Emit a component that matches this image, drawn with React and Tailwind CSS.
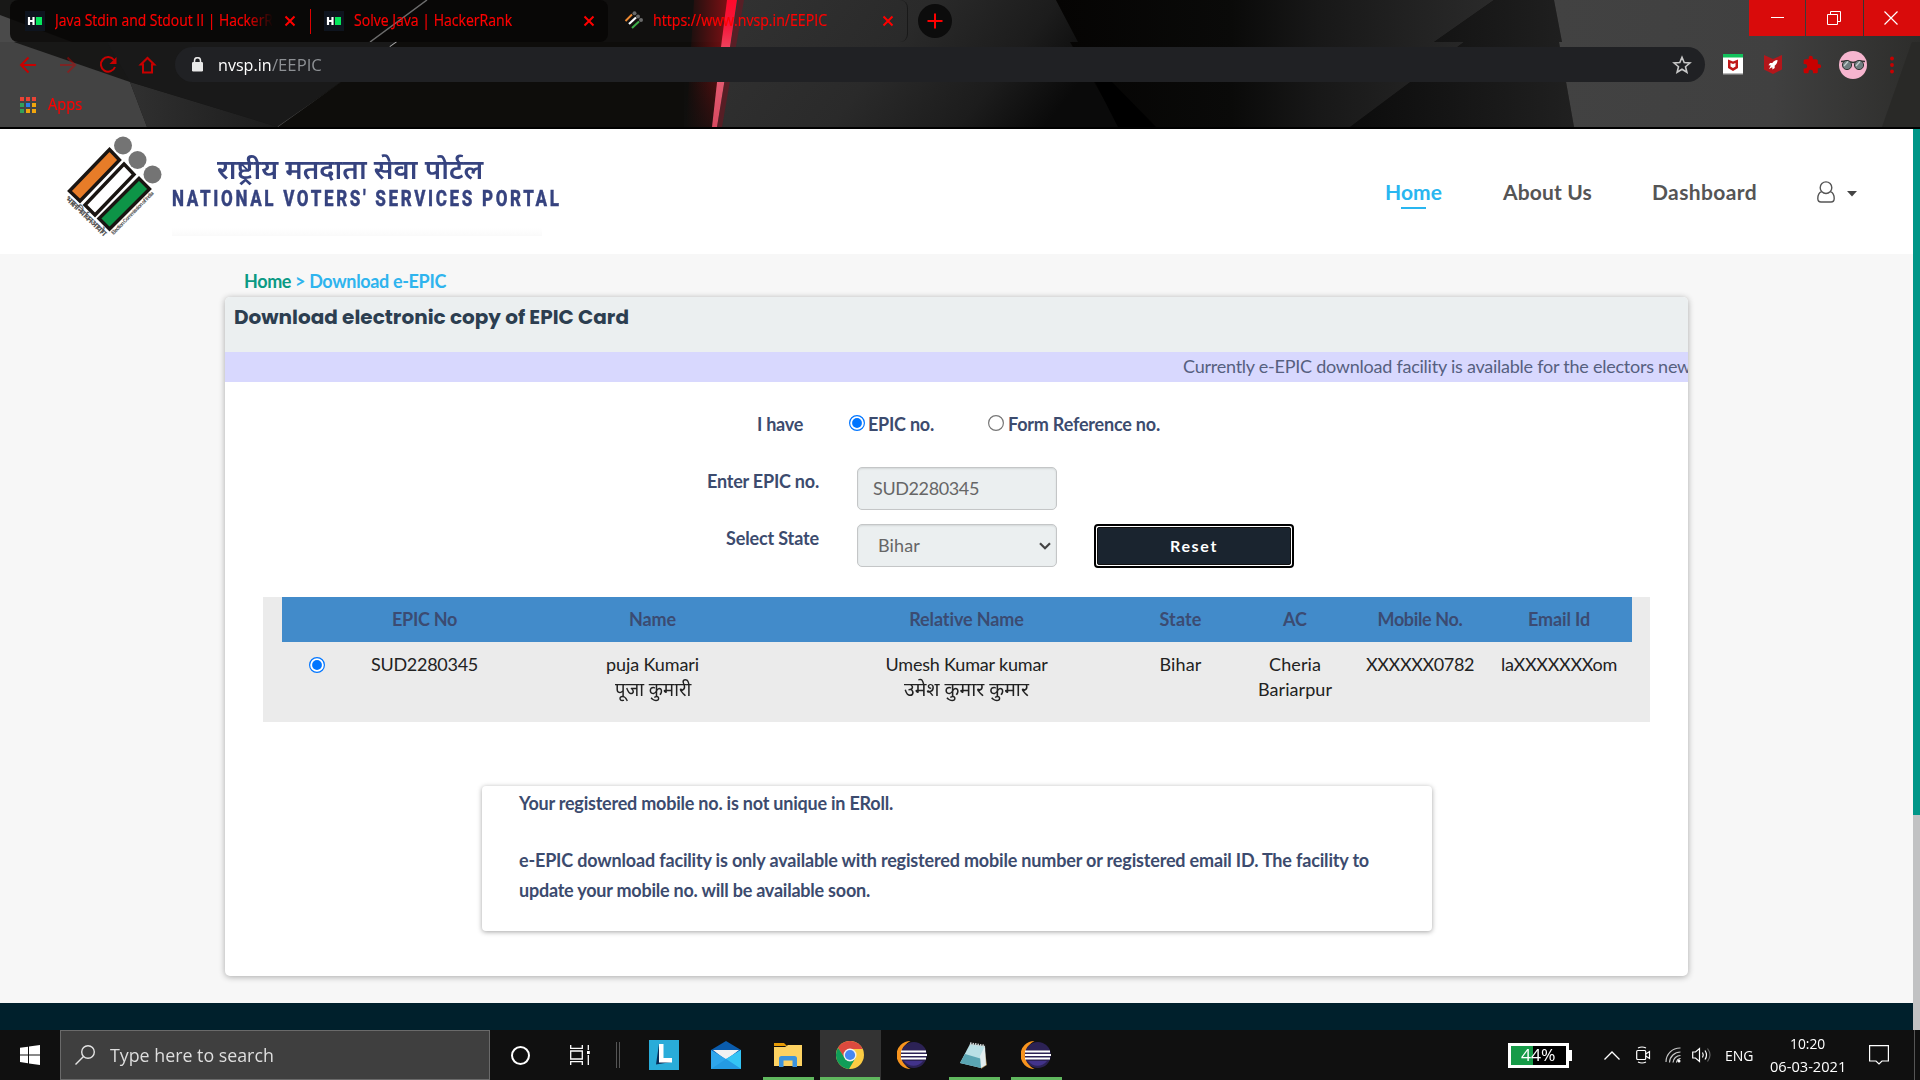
import React, { useLayoutEffect, useRef, useState } from "react";

/* One line of text whose tracking is adjusted so that it fills the given width. */
function Fit({ w, className = "", children }) {
  const ref = useRef(null);
  const [gap, setGap] = useState(0);
  useLayoutEffect(() => {
    const natural = ref.current.getBoundingClientRect().width;
    setGap((w - natural) / children.length);
  }, []);
  return (
    <span ref={ref} className={"inline-block whitespace-pre " + className} style={{ letterSpacing: gap + "px" }}>
      {children}
    </span>
  );
}

/* One line of text stretched horizontally to the given width. */
function Stretch({ w, className = "", children }) {
  const ref = useRef(null);
  const [scale, setScale] = useState(1);
  useLayoutEffect(() => {
    setScale(w / ref.current.offsetWidth);
  }, []);
  return (
    <span className="flex" style={{ width: w }}>
      <span ref={ref} className={"inline-block origin-left whitespace-pre " + className} style={{ transform: `scaleX(${scale})` }}>
        {children}
      </span>
    </span>
  );
}

function Wallpaper() {
  return (
    <svg className="absolute inset-0" width="1920" height="127" viewBox="0 0 1920 127">
      <defs>
        <linearGradient id="panel" x1="0" x2="1" y1="0" y2="0.25">
          <stop offset="0" stopColor="#323232" />
          <stop offset="0.5" stopColor="#2a2a2a" />
          <stop offset="0.8" stopColor="#1c1c1c" />
          <stop offset="1" stopColor="#0a0a0a" />
        </linearGradient>
        <linearGradient id="glow" x1="0" x2="1">
          <stop offset="0" stopColor="#c01010" stopOpacity="0" />
          <stop offset="0.4" stopColor="#c01014" stopOpacity="0.25" />
          <stop offset="1" stopColor="#c01018" stopOpacity="0.65" />
        </linearGradient>
        <linearGradient id="fade" x1="0" x2="0" y1="0" y2="1">
          <stop offset="0" stopColor="#11100f" stopOpacity="0" />
          <stop offset="1" stopColor="#11100f" stopOpacity="0.7" />
        </linearGradient>
        <linearGradient id="beam" x1="0" x2="0" y1="0" y2="1">
          <stop offset="0" stopColor="#ff0a2c" />
          <stop offset="0.2" stopColor="#f5173a" />
          <stop offset="0.5" stopColor="#e96076" />
          <stop offset="1" stopColor="#d84a60" />
        </linearGradient>
        <linearGradient id="mid" x1="0" x2="1">
          <stop offset="0" stopColor="#050403" />
          <stop offset="0.4" stopColor="#0a0a09" />
          <stop offset="0.6" stopColor="#181818" />
          <stop offset="1" stopColor="#2a2a2a" />
        </linearGradient>
        <linearGradient id="dark" x1="0" x2="1">
          <stop offset="0" stopColor="#0c0c0c" />
          <stop offset="1" stopColor="#202020" />
        </linearGradient>
        <linearGradient id="far" x1="0" x2="1">
          <stop offset="0" stopColor="#424242" />
          <stop offset="0.6" stopColor="#404040" />
          <stop offset="1" stopColor="#2d2d2b" />
        </linearGradient>
        <linearGradient id="shard" x1="0" x2="1">
          <stop offset="0" stopColor="#303030" />
          <stop offset="1" stopColor="#1c1c1c" />
        </linearGradient>
      </defs>
      <rect width="1920" height="127" fill="#11100f" />
      <path d="M0 0H427L370 42H397L278 127H0Z" fill="#181817" />
      <path d="M14 42 130 82 147 127H0V42Z" fill="#434343" />
      <path d="M0 15 72 42H0Z" fill="#4a4a4a" />
      <path d="M130 82 278 127H147Z" fill="url(#shard)" />
      <path d="M107 42H397L278 127 130 82Z" fill="#191919" />
      <path d="M397 42 390 47" stroke="#b0b0b0" strokeWidth="1.600" />
      <path d="M343 82 278 127" stroke="#565656" strokeWidth="1.300" />
      <path d="M397 42H720L713 127H278Z" fill="#0e0d0b" />
      <path d="M735 0H1056L1078 42H1070L1120 127H716Z" fill="url(#panel)" />
      <path d="M1056 0H1494L1434 42H1464L1350 127H1120L1070 42H1078Z" fill="url(#mid)" />
      <path d="M1095 82 1112 82 1156 127H1118Z" fill="#000" />
      <path d="M1494 0H1554L1562 42H1559L1574 127H1350L1464 42H1434Z" fill="url(#dark)" />
      <path d="M1554 0H1920V127H1574L1559 42H1562Z" fill="url(#far)" />
      <path d="M1920 42V127H1882L1912 42Z" fill="#292927" />
      <path d="M694 0H730L722 42 716 127H686Z" fill="url(#glow)" />
      <path d="M684 60H719L714 127H684Z" fill="url(#fade)" />
      <path d="M727 0H737L730 47 717 127H712L721 47Z" fill="url(#beam)" />
      <path d="M738 0H744L722 127H717Z" fill="#a00014" opacity="0.35" />
    </svg>
  );
}

const CloseX = ({ className = "" }) => (
  <svg width="12" height="12" viewBox="0 0 12 12" className={"relative shrink-0 " + className}>
    <path d="M1.5 1.5 10.5 10.5M10.5 1.5 1.5 10.5" stroke="#f00" strokeWidth="2" />
  </svg>
);

const HrIcon = () => (
  <svg width="20" height="20" viewBox="0 0 20 20" className="shrink-0">
    <rect width="20" height="20" fill="#0e141e" />
    <path d="M4 6V14M8.500 6V14M4 10H8.500" stroke="#fff" strokeWidth="2.200" />
    <rect x="11" y="6" width="6" height="8" fill="#05e85c" />
  </svg>
);

const NvspFavicon = () => (
  <svg width="20" height="20" viewBox="0 0 20 20" className="shrink-0">
    <path d="M1.500 10 8 3.500" stroke="#ef8a32" strokeWidth="2" />
    <path d="M5 13 12 6.500" stroke="#fff" strokeWidth="2.200" />
    <path d="M8 17 15 10.500" stroke="#3fae49" strokeWidth="2" />
    <circle cx="10.500" cy="2.200" r="2" fill="#6a6a6a" />
    <circle cx="14" cy="5.400" r="2" fill="#6a6a6a" />
    <circle cx="17" cy="9" r="2" fill="#6a6a6a" />
  </svg>
);

function BrowserChrome() {
  const grid = ["#ea4335", "#ea4335", "#ea4335", "#34a058", "#2b7de9", "#f2a60d", "#34a058", "#f2a60d", "#f2a60d"];
  return (
    <div className="relative h-[129px] w-full overflow-hidden border-b-2 border-black bg-black font-['Open_Sans','Noto_Sans',sans-serif]">
      <Wallpaper />
      <div className="relative flex h-[42px] items-start pl-[10px] text-[16px] leading-[41px] text-[#f00] [-webkit-text-stroke:0.2px_#f00]">
        <div className="flex h-[42px] w-[300px] items-center rounded-l-lg bg-[#070605]/85 pl-[15px]">
          <HrIcon />
          <div className="ml-[10px] h-[42px] w-[218px] [mask-image:linear-gradient(to_right,#000_88%,transparent_100%)]">
            <Stretch w={218}>Java Stdin and Stdout II | HackerR</Stretch>
          </div>
          <CloseX className="ml-[11px]" />
        </div>
        <div className="relative flex h-[42px] w-[298px] items-center rounded-r-lg bg-[#070605]/85">
          <svg className="absolute left-[55px] top-0" width="68" height="42" viewBox="0 0 68 42"><path d="M62 0 5 42" stroke="#6c6c6c" strokeWidth="1.500" /></svg>
          <div className="h-[25px] w-px bg-[#d00]" />
          <div className="ml-[13px] flex"><HrIcon /></div>
          <div className="relative ml-[10px] h-[42px]"><Stretch w={158}>Solve Java | HackerRank</Stretch></div>
          <CloseX className="ml-[71px]" />
        </div>
        <div className="flex h-[42px] w-[300px] items-center rounded-lg border-r border-black/40 pl-[16px]">
          <NvspFavicon />
          <div className="ml-[9px] h-[42px]"><Stretch w={174}>https://www.nvsp.in/EEPIC</Stretch></div>
          <CloseX className="ml-[55px]" />
        </div>
        <div className="ml-[10px] mt-[4px] flex h-[34px] w-[34px] items-center justify-center rounded-full bg-[#0c0c0c]">
          <svg width="16" height="16" viewBox="0 0 16 16"><path d="M8 .5V15.500M.5 8H15.500" stroke="#f00" strokeWidth="2" /></svg>
        </div>
        <div className="ml-auto flex h-[36px] gap-px">
          <div className="flex w-[56px] items-center justify-center bg-[#d90b0b]"><div className="mb-px h-px w-[13px] bg-white" /></div>
          <div className="flex w-[57px] items-center justify-center bg-[#d90b0b] pr-[2px]">
            <svg width="14" height="14" viewBox="0 0 14 14" fill="none" stroke="#fff"><path d="M.5 3.500H10.500V13.500H.5ZM3.500 3V.5H13.500V10.500H11" /></svg>
          </div>
          <div className="flex w-[56px] items-center justify-center bg-[#d90b0b] pr-[2px]">
            <svg width="14" height="14" viewBox="0 0 14 14" stroke="#fff" strokeWidth="1.200"><path d="M.5 .5 13.500 13.500M13.500 .5 .5 13.500" /></svg>
          </div>
        </div>
      </div>
      <div className="relative flex h-[45px] items-center">
        <svg width="175" height="46" viewBox="0 0 175 46" fill="none" stroke="#c80000" strokeWidth="2" className="shrink-0">
          <path d="M36 23H21.500M28.500 15.500 21 23 28.500 30.500" />
          <path d="M60 23H74.500M67.500 15.500 75 23 67.500 30.500" opacity="0.45" />
          <path d="M114 18A7.300 7.300 0 1 0 115 25" />
          <path d="M116.500 15V22H109.500Z" fill="#c80000" stroke="none" />
          <path d="M143 30.500V22.500H140.800L147.500 16 154.200 22.500H152V30.500Z" />
        </svg>
        <div className="flex h-[35px] w-[1530px] items-center rounded-full bg-[#202124] pl-[17px] pr-[13px] text-[17px] leading-[35px]">
          <svg width="11" height="15" viewBox="0 0 11 15"><rect y="5" width="11" height="9.500" rx="1.200" fill="#e8e8e8" /><path d="M2.500 6V3.700a3 3 0 0 1 6 0V6" fill="none" stroke="#e8e8e8" strokeWidth="1.500" /></svg>
          <div className="ml-[15px] flex h-[35px]">
            <Stretch w={54} className="text-white">nvsp.in</Stretch>
            <Stretch w={50} className="text-[#8d9094]">/EEPIC</Stretch>
          </div>
          <svg width="20" height="20" viewBox="0 0 20 20" className="ml-auto" fill="none" stroke="#c8c8c8" strokeWidth="1.600"><path d="M10 2.300 12.200 7.600 17.900 8 13.500 11.700 14.900 17.300 10 14.200 5.100 17.300 6.500 11.700 2.100 8 7.800 7.600Z" /></svg>
        </div>
        <svg width="20" height="21" viewBox="0 0 20 21" className="ml-[18px]">
          <rect width="20" height="21" fill="#fff" /><rect width="20" height="3.500" fill="#12c25c" /><rect y="19.500" width="20" height="1.500" fill="#777" />
          <path d="M5 5.500 10 7.500 15 5.500V14L10 17 5 14Z" fill="#c01818" /><path d="M7.500 9 10 10 12.500 9V12.500L10 14 7.500 12.500Z" fill="#fff" />
        </svg>
        <svg width="18" height="19" viewBox="0 0 18 19" className="ml-[21px]">
          <path d="M0 0 9 4 18 0V14.500L9 19 0 14.500Z" fill="#b3161b" />
          <path d="M13.500 5C11 5.200 9.500 6.200 8.300 8H6L4.500 10.300 6.800 10.600 5 14 8.200 12.200 8.500 14.500 10.700 13V10.700C12.600 9.300 13.500 7.500 13.500 5Z" fill="#fff" />
        </svg>
        <svg width="20" height="20" viewBox="0 0 24 24" className="ml-[20px]" fill="#c80000"><path d="M20.500 11H19V7c0-1.100-.9-2-2-2h-4V3.500a2.500 2.500 0 0 0-5 0V5H4c-1.100 0-2 .9-2 2v3.800h1.500a2.700 2.700 0 0 1 0 5.400H2V20c0 1.100.9 2 2 2h3.800v-1.500a2.700 2.700 0 0 1 5.400 0V22H17c1.100 0 2-.9 2-2v-4h1.500a2.500 2.500 0 0 0 0-5z" /></svg>
        <svg width="28" height="28" viewBox="0 0 28 28" className="ml-[17px]">
          <circle cx="14" cy="14" r="14" fill="#f6b5cf" />
          <path d="M2 10.500 7 10 14 11.500 21 10 26 10.500" fill="none" stroke="#333" strokeWidth="1.500" />
          <circle cx="8" cy="14" r="4.600" fill="#6f7d80" stroke="#333" /><circle cx="20" cy="14" r="4.600" fill="#6f7d80" stroke="#333" />
          <path d="M5 15 9 10.500M17 15 21 10.500" stroke="#c3cccd" strokeWidth="1.300" />
        </svg>
        <svg width="4" height="18" viewBox="0 0 4 18" className="ml-[23px]" fill="#c80000"><circle cx="2" cy="2.500" r="1.900" /><circle cx="2" cy="9" r="1.900" /><circle cx="2" cy="15.500" r="1.900" /></svg>
      </div>
      <div className="relative flex h-[36px] items-center pl-[20px] text-[16px] leading-[34px] text-[#f00] [-webkit-text-stroke:0.2px_#f00]">
        <div className="grid grid-cols-3 gap-[2px]">
          {grid.map((c, i) => <div key={i} className="h-[4px] w-[4px]" style={{ background: c }} />)}
        </div>
        <div className="ml-[12px] h-[36px]"><Stretch w={34}>Apps</Stretch></div>
      </div>
    </div>
  );
}

function Emblem() {
  return (
    <svg width="100" height="102" viewBox="0 0 100 102" className="shrink-0">
      <g stroke="#1a1512" strokeWidth="3.400">
        <path d="M45.500 14.500 55.500 25 16 66 5.500 56Z" fill="#e77c28" />
        <path d="M60 29 70 39.500 31 80 21 70Z" fill="#fff" />
        <path d="M75 43.500 85.500 54 45.500 94 35 83.500Z" fill="#0d9447" />
      </g>
      <circle cx="59" cy="10.500" r="9" fill="#747474" />
      <circle cx="73.500" cy="25" r="9" fill="#747474" />
      <circle cx="88.500" cy="39.500" r="9" fill="#747474" />
      <text transform="translate(-0.500 63) rotate(44)" textLength="54" fontSize="8.500" fontWeight="700" fill="#555" fontFamily="Noto Sans, sans-serif">भारत निर्वाचन आयोग</text>
      <text transform="translate(49.500 100) rotate(-45.500)" textLength="58" fontSize="5.500" fontWeight="700" fill="#555" fontFamily="Roboto, sans-serif">Election Commission of India</text>
    </svg>
  );
}

function SiteHeader() {
  return (
    <header className="flex h-[125px] items-start bg-white pl-[64px] text-[21px] font-bold text-[#555]">
      <div className="mt-[6px] flex"><Emblem /></div>
      <div className="ml-[8px] mt-[20px] flex w-[390px] flex-col text-[#36437f]">
        <div className="ml-[45px] h-[35px] font-['Noto_Sans','Noto_Sans_Devanagari',sans-serif] text-[27px] font-semibold leading-[40px]">
          <Stretch w={266}>राष्ट्रीय मतदाता सेवा पोर्टल</Stretch>
        </div>
        <div className="h-[28px] font-['Roboto',sans-serif] text-[22.500px] font-extrabold leading-[29px]">
          <Stretch w={390} className="tracking-[3.500px] [-webkit-text-stroke:0.4px_#36437f]">NATIONAL VOTERS' SERVICES PORTAL</Stretch>
        </div>
        <div className="mt-[16px] h-[8px] w-[370px] bg-gradient-to-b from-white to-[#fafafa]" />
      </div>
      <nav className="ml-auto mr-[56px] mt-[50px] flex items-start leading-[26px]">
        <div className="flex flex-col items-center text-[#29b6f0]">
          <Fit w={57}>Home</Fit>
          <div className="mt-[2px] h-[2px] w-[25px] bg-[#29b6f0]" />
        </div>
        <Fit w={89} className="ml-[61px]">About Us</Fit>
        <Fit w={105} className="ml-[60px]">Dashboard</Fit>
        <svg width="18" height="22" viewBox="0 0 18 22" fill="none" stroke="#555" strokeWidth="1.400" className="ml-[60px] mt-[2px]">
          <circle cx="9" cy="6.700" r="5.800" />
          <path d="M4.600 10.600C2 11.600.8 14 .8 17.500.8 20 2 21 4 21H14C16 21 17.200 20 17.200 17.500 17.200 14 16 11.600 13.400 10.600" />
        </svg>
        <svg width="10" height="6" viewBox="0 0 10 6" className="ml-[12px] mt-[12px]"><path d="M0 0H10L5 5.500Z" fill="#444" /></svg>
      </nav>
    </header>
  );
}

function Radio({ on }) {
  return (
    <svg width="16" height="16" viewBox="0 0 16 16" className="shrink-0">
      <circle cx="8" cy="8" r="7.400" fill="#fff" stroke={on ? "#0075ff" : "#767676"} strokeWidth="1.200" />
      {on && <circle cx="8" cy="8" r="4.900" fill="#0075ff" />}
    </svg>
  );
}

const columns = [
  { w: "w-[144px]", head: ["EPIC No", 65], lines: [["SUD2280345", 107]] },
  { w: "w-[312px]", head: ["Name", 47], lines: [["puja Kumari", 93], ["पूजा कुमारी", 76, true]] },
  { w: "w-[316px]", head: ["Relative Name", 115], lines: [["Umesh Kumar kumar", 162], ["उमेश कुमार कुमार", 125, true]] },
  { w: "w-[112px]", head: ["State", 42], lines: [["Bihar", 42]] },
  { w: "w-[117px]", head: ["AC", 24], lines: [["Cheria", 52], ["Bariarpur", 74]] },
  { w: "w-[133px]", head: ["Mobile No.", 85], lines: [["XXXXXX0782", 108]] },
  { w: "w-[145px]", head: ["Email Id", 62], lines: [["laXXXXXXXom", 116]] },
];

function VoterTable() {
  return (
    <div className="ml-[38px] mt-[29px] h-[125px] w-[1387px] bg-[#ebebeb] pl-[19px] pr-[18px]">
      <div className="flex h-[45px] bg-[#428bca] pl-[70px] text-[18px] font-bold leading-[44px] text-[#3b4b72]">
        {columns.map((c) => (
          <div key={c.head[0]} className={"flex shrink-0 justify-center pl-px " + c.w}><Fit w={c.head[1]}>{c.head[0]}</Fit></div>
        ))}
      </div>
      <div className="flex pt-[10px] text-[18px] leading-[25px] text-[#222]">
        <div className="flex w-[70px] shrink-0 justify-center pt-[5px]"><Radio on /></div>
        {columns.map((c) => (
          <div key={c.head[0]} className={"flex shrink-0 flex-col items-center pl-px " + c.w}>
            {c.lines.map(([t, w, hindi]) =>
              hindi ? (
                <Stretch key={t} w={w} className="h-[25px] font-['Noto_Sans','Noto_Sans_Devanagari',sans-serif] text-[19px] leading-[24px]">{t}</Stretch>
              ) : (
                <Fit key={t} w={w}>{t}</Fit>
              )
            )}
          </div>
        ))}
      </div>
    </div>
  );
}

function Card() {
  return (
    <section className="ml-[225px] h-[679px] w-[1463px] overflow-hidden rounded-[5px] bg-white shadow-[0_1px_6px_rgba(0,0,0,0.32)]">
      <div className="h-[55px] bg-[#ebeff0] pl-[9px] font-['Poppins','Inter',sans-serif] text-[20px] font-bold leading-[41px] text-[#2c3e50]">
        <Fit w={395}>Download electronic copy of EPIC Card</Fit>
      </div>
      <div className="h-[30px] overflow-hidden bg-[#d8d8fe] pl-[958px] text-[18px] leading-[29px] text-[#56607f]">
        <Fit w={508}>Currently e-EPIC download facility is available for the electors new</Fit>
      </div>
      <div className="text-[18px] font-bold leading-[24px] text-[#3c4b6e]">
        <div className="mt-[30px] flex h-[24px] items-start pl-[532px]">
          <Fit w={46}>I have</Fit>
          <div className="ml-[46px] mt-[3px]"><Radio on /></div>
          <Fit w={66} className="ml-[3px]">EPIC no.</Fit>
          <div className="ml-[54px] mt-[3px]"><Radio /></div>
          <Fit w={152} className="ml-[4px]">Form Reference no.</Fit>
        </div>
        <div className="mt-[31px] flex h-[57px] items-start">
          <div className="mt-[2px] flex w-[594px] justify-end"><Fit w={112}>Enter EPIC no.</Fit></div>
          <div className="ml-[38px] h-[43px] w-[200px] rounded-[5px] border border-[#c4c6c7] bg-[#ebeff0] pl-[15px] font-normal leading-[41px] text-[#666] shadow-[inset_0_1px_2px_rgba(0,0,0,0.1)]">
            <Fit w={106}>SUD2280345</Fit>
          </div>
        </div>
        <div className="flex h-[44px] items-start">
          <div className="mt-[2px] flex w-[594px] justify-end"><Fit w={93}>Select State</Fit></div>
          <div className="ml-[38px] flex h-[43px] w-[200px] items-center justify-between rounded-[5px] border border-[#c4c6c7] bg-[#ebeff0] pl-[20px] pr-[5px] font-normal leading-[41px] text-[#666] shadow-[inset_0_1px_2px_rgba(0,0,0,0.1)]">
            <Fit w={42}>Bihar</Fit>
            <svg width="12" height="8" viewBox="0 0 12 8" fill="none" stroke="#444" strokeWidth="2.200"><path d="M1 1.200 6 6.200 11 1.200" /></svg>
          </div>
          <div className="ml-[37px] flex h-[44px] w-[200px] items-center justify-center rounded-[4px] border-2 border-black bg-white p-px">
            <div className="flex h-full w-full items-center justify-center rounded-[2px] border border-[#101010] bg-[#1a242f] text-[16px] text-white"><Fit w={48}>Reset</Fit></div>
          </div>
        </div>
      </div>
      <VoterTable />
      <div className="ml-[257px] mt-[64px] h-[145px] w-[950px] rounded-[4px] bg-white pl-[37px] pt-[2px] text-[18px] font-bold leading-[30px] text-[#3c4b6e] shadow-[0_1px_5px_rgba(0,0,0,0.36)]">
        <div className="h-[57px]"><Fit w={374}>Your registered mobile no. is not unique in ERoll.</Fit></div>
        <div className="h-[30px]"><Fit w={850}>e-EPIC download facility is only available with registered mobile number or registered email ID. The facility to</Fit></div>
        <div className="h-[30px]"><Fit w={351}>update your mobile no. will be available soon.</Fit></div>
      </div>
    </section>
  );
}

function Page() {
  return (
    <div className="flex h-[901px] font-['Lato',sans-serif]">
      <main className="flex w-[1913px] flex-col bg-[#f7f7f7]">
        <SiteHeader />
        <div className="flex h-[43px] pl-[244px] pt-[14px] text-[18px] font-bold leading-[26px]">
          <Fit w={51} className="text-[#0b9a84]">{"Home "}</Fit>
          <Fit w={151} className="text-[#2fb4ee]">{"> Download e-EPIC"}</Fit>
        </div>
        <Card />
        <div className="mt-auto h-[27px] bg-[#00202c]" />
      </main>
      <div className="w-[7px] bg-[#c1c2c3]"><div className="h-[686px] bg-[#009688]" /></div>
    </div>
  );
}

const Eclipse = () => (
  <svg width="30" height="28" viewBox="0 0 30 28">
    <path d="M13.500 0A14 14 0 0 0 13.500 28A15.500 15.500 0 0 1 13.500 0Z" fill="#f7941e" />
    <circle cx="16.800" cy="14" r="13" fill="#2c2255" />
    <path d="M7 20A12 12 0 0 0 26 20Z" fill="#42338a" />
    <path d="M4 10.500H29M4 14H30M4 17.500H29" stroke="#fff" strokeWidth="1.900" />
  </svg>
);

const ChromeIcon = () => (
  <svg width="28" height="28" viewBox="0 0 28 28">
    <circle cx="14" cy="14" r="14" fill="#fbcc43" />
    <path d="M14 14 2 6.800A14 14 0 0 1 26.600 8H14Z" fill="#db4a3e" />
    <path d="M2 6.800A14 14 0 0 0 13 28L19.400 17.300 8.500 17Z" fill="#109d58" />
    <path d="M2 6.800 8.700 17.200 14 8Z" fill="#db4a3e" />
    <path d="M2 6.800 8.600 17 7 18Z" fill="#109d58" />
    <circle cx="14" cy="14" r="6.500" fill="#f1f1f1" /><circle cx="14" cy="14" r="5.100" fill="#4587f3" />
  </svg>
);

function Slot({ width, active, open, children }) {
  return (
    <div className={"flex h-[50px] flex-col items-center " + width + (active ? " bg-[#333]" : "")}>
      <div className="flex h-[47px] items-center pt-[3px]">{children}</div>
      {open && <div className={"h-[3px] bg-[#60b75e] " + (active ? "w-full" : "w-[51px]")} />}
    </div>
  );
}

function Taskbar() {
  return (
    <footer className="flex h-[50px] w-full items-start bg-[#101010] font-['Open_Sans','Noto_Sans',sans-serif] text-white">
      <div className="flex h-[50px] w-[60px] items-center justify-center">
        <svg width="20" height="20" viewBox="0 0 20 20" fill="#fff"><path d="M0 2.800 8 1.700V9.400H0ZM9 1.500 20 0V9.400H9ZM0 10.400H8V18.200L0 17.100ZM9 10.400H20V20L9 18.400Z" /></svg>
      </div>
      <div className="flex h-[50px] w-[430px] items-center border border-[#6a6a6a] bg-[#3f3f3f] pl-[14px] text-[19px] leading-[46px] text-[#dedede]">
        <svg width="20" height="20" viewBox="0 0 20 20" fill="none" stroke="#e4e4e4" strokeWidth="1.400"><circle cx="13" cy="7" r="6.300" /><path d="M8.500 11.500.5 19.500" /></svg>
        <div className="ml-[15px]"><Stretch w={164}>Type here to search</Stretch></div>
      </div>
      <div className="flex h-[50px] w-[60px] items-center justify-center"><div className="h-[19px] w-[19px] rounded-full border-[2.500px] border-white" /></div>
      <div className="flex h-[50px] w-[60px] items-center justify-center">
        <svg width="20" height="20" viewBox="0 0 20 20" fill="none" stroke="#fff" strokeWidth="1.300"><path d="M.7 0V3.300H12.300V0M.7 6H12.300V14H.7ZM.7 20V16.700H12.300V20M18.300 0V5M18.300 10V20" /><path d="M17 6H19.800V9H17Z" fill="#fff" stroke="none" /></svg>
      </div>
      <div className="ml-[6px] mt-[12px] flex h-[26px] w-[4px] justify-between"><div className="w-px bg-[#555]" /><div className="w-px bg-[#555]" /></div>
      <Slot width="ml-[13px] w-[62px]">
        <svg width="30" height="30" viewBox="0 0 30 30"><rect width="30" height="30" fill="#29acd9" /><path d="M10 4 7 24.500 10 23ZM7 24.500 22 22V20L10 21Z" fill="#0a2c57" /><path d="M10 4H14.500V18H23V22.500H10Z" fill="#fff" /></svg>
      </Slot>
      <Slot width="w-[62px]">
        <svg width="30" height="28" viewBox="0 0 30 28"><path d="M0 9 15 0 30 9V16H0Z" fill="#0a5cad" /><path d="M2 9H28L15 19Z" fill="#f2f2f2" /><path d="M0 9 15 18 30 9V28H0Z" fill="#2ea6ec" /><path d="M15 18 30 9V28Z" fill="#34c4f4" /><path d="M0 28 15 18 30 28Z" fill="#249ae2" /></svg>
      </Slot>
      <Slot width="w-[62px]" open>
        <svg width="28" height="24" viewBox="0 0 28 24"><path d="M0 0H10L13 3H0Z" fill="#e69a05" /><path d="M0 4H11L14 2H28V23H0Z" fill="#fdd262" /><path d="M5 24V15.500Q5 13 7.500 13H20.500Q23 13 23 15.500V24H18.500V17.500H9.500V24Z" fill="#3c93dd" /></svg>
      </Slot>
      <Slot width="ml-px w-[61px] pr-px" active open><ChromeIcon /></Slot>
      <Slot width="w-[62px]"><Eclipse /></Slot>
      <Slot width="w-[62px]" open>
        <svg width="28" height="27" viewBox="0 0 28 27"><path d="M24 3 27 23 21 27Z" fill="#a28550" /><path d="M10 2 25 4 21 26 0 21Z" fill="#b9e0e6" /><path d="M0 21 5 12 22 17 21 26Z" fill="#5aa5b3" /><path d="M25 4 26 23 21 26 20 14Z" fill="#e3edef" /><path d="M10 1.500 25 4" stroke="#cfd4d4" strokeWidth="2.500" strokeDasharray="1.500 1" /></svg>
      </Slot>
      <Slot width="w-[62px]" open><Eclipse /></Slot>
      <div className="ml-auto flex h-[50px] items-center">
        <div className="flex h-[25px] w-[61px] items-center justify-center border-[3px] border-white bg-[linear-gradient(to_right,#169b48_40%,#000_40%)] text-[16px] leading-[18px]"><Stretch w={35}>44%</Stretch></div>
        <div className="h-[11px] w-[3px] bg-white" />
        <svg width="16" height="9" viewBox="0 0 16 9" fill="none" stroke="#fff" strokeWidth="1.300" className="ml-[32px]"><path d="M.5 8.500 8 1 15.500 8.500" /></svg>
        <svg width="15" height="18" viewBox="0 0 15 18" fill="none" stroke="#fff" strokeWidth="1.200" className="ml-[16px]"><rect x=".7" y="4.500" width="9" height="9" rx="1" /><path d="M9.700 8 13.500 5.500V12.500L9.700 10M2 2Q6 0 10 2M2 16Q6 18 10 16" /></svg>
        <svg width="16" height="16" viewBox="0 0 16 16" fill="none" className="ml-[14px]"><g stroke="#c8c8c8" strokeWidth="1.200"><path d="M1 15A14 14 0 0 1 15.500 1M4.500 15.500A11 11 0 0 1 15.500 5M8 15.500A7.500 7.500 0 0 1 15.500 8.500" /></g><path d="M11.500 15.500A4 4 0 0 1 15.500 11.500" stroke="#fff" /><circle cx="14" cy="14" r="1.500" fill="#fff" /></svg>
        <svg width="20" height="18" viewBox="0 0 20 18" fill="none" stroke="#fff" strokeWidth="1.200" className="ml-[11px]"><path d="M.7 6H3.500L7.500 2.500V15.500L3.500 12H.7ZM10.500 6.500Q12 9 10.500 11.500M13 4.500Q16 9 13 13.500" /><path d="M15.500 2.500Q20.500 9 15.500 15.500" stroke="#666" /></svg>
        <div className="ml-[13px] text-[15px]"><Stretch w={29}>ENG</Stretch></div>
        <div className="ml-[15px] flex h-[50px] w-[77px] flex-col items-center pt-[2px] text-[15px] leading-[23px]"><Stretch w={35}>10:20</Stretch><Stretch w={76}>06-03-2021</Stretch></div>
        <svg width="20" height="20" viewBox="0 0 20 20" fill="none" stroke="#fff" strokeWidth="1.200" className="ml-[23px]"><path d="M.6.600H19.400V16H13L10 19 7 16H.6Z" /></svg>
        <div className="ml-[25px] mr-[5px] h-[50px] w-px bg-[#555]" />
      </div>
    </footer>
  );
}

export default function App() {
  return (
    <div className="h-[1080px] w-[1920px] overflow-hidden bg-white">
      <BrowserChrome />
      <Page />
      <Taskbar />
    </div>
  );
}
